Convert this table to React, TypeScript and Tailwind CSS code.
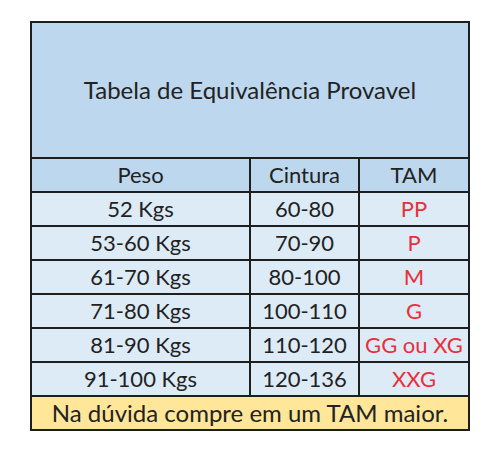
const rows = [
  { peso: "52 Kgs", cintura: "60-80", tam: "PP" },
  { peso: "53-60 Kgs", cintura: "70-90", tam: "P" },
  { peso: "61-70 Kgs", cintura: "80-100", tam: "M" },
  { peso: "71-80 Kgs", cintura: "100-110", tam: "G" },
  { peso: "81-90 Kgs", cintura: "110-120", tam: "GG ou XG" },
  { peso: "91-100 Kgs", cintura: "120-136", tam: "XXG" },
];

function Row({
  cells,
  bg,
  last = "text-[#222]",
}: {
  cells: string[];
  bg: string;
  last?: string;
}) {
  return (
    <div className={`grid grid-cols-[217px_109px_1fr] h-[34px] border-t-2 border-[#1e1e1e] ${bg}`}>
      <div className="flex items-center justify-center text-[#222]">{cells[0]}</div>
      <div className="flex items-center justify-center border-l-2 border-[#1e1e1e] text-[#222]">
        {cells[1]}
      </div>
      <div className={`flex items-center justify-center border-l-2 border-[#1e1e1e] ${last}`}>
        {cells[2]}
      </div>
    </div>
  );
}

export default function App() {
  return (
    <div className="w-[500px] h-[459px] bg-white pt-[21px] pl-[30px] font-['Lato','Liberation_Sans',sans-serif]">
      <div className="w-[440px] border-2 border-[#1e1e1e] text-[22px] leading-none">
        <div className="h-[134px] bg-[#bdd7ee] flex items-center justify-center text-[24px] text-[#222]">
          Tabela de Equivalência Provavel
        </div>
        <Row cells={["Peso", "Cintura", "TAM"]} bg="bg-[#bdd7ee]" />
        {rows.map((r) => (
          <Row
            key={r.peso}
            cells={[r.peso, r.cintura, r.tam]}
            bg="bg-[#ddebf7]"
            last="text-[#e8303a]"
          />
        ))}
        <div className="h-[34px] border-t-2 border-[#1e1e1e] bg-[#ffe699] flex items-center justify-center text-[24px] text-[#222]">
          Na dúvida compre em um TAM maior.
        </div>
      </div>
    </div>
  );
}
